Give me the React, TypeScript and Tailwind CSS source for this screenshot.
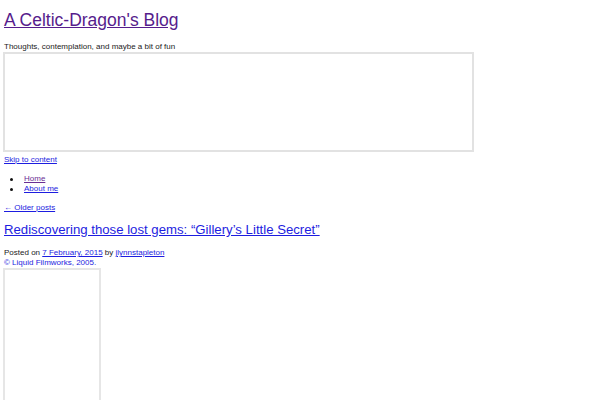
export default function App() {
  const f = { fontFamily: '"Liberation Sans", Arial, sans-serif' };
  return (
    <div className="w-[600px] h-[400px] overflow-hidden bg-white px-[4px] text-[8px] leading-[10px] text-[#222]" style={f}>
      <h1 className="pt-[10px] text-[17.5px] leading-[20px] font-normal">
        <a href="#" className="text-[#561c8c] underline">A Celtic-Dragon's Blog</a>
      </h1>
      <div className="mt-[12px]">Thoughts, contemplation, and maybe a bit of fun</div>
      <div className="-ml-px w-[471px] h-[100px] border-2 border-[#e2e2e2] bg-white"></div>
      <div className="mt-[3px]">
        <a href="#" className="text-[#1d1de0] underline">Skip to content</a>
      </div>
      <ul className="mt-[9px] list-none pl-[6px]">
        <li className="flex items-center">
          <span className="w-[3px] h-[3px] rounded-full bg-[#111] mr-[11px]"></span>
          <a href="#" className="text-[#6a2e94] underline">Home</a>
        </li>
        <li className="flex items-center">
          <span className="w-[3px] h-[3px] rounded-full bg-[#111] mr-[11px]"></span>
          <a href="#" className="text-[#1d1de0] underline">About me</a>
        </li>
      </ul>
      <div className="mt-[9px]">
        <a href="#" className="text-[#1d1de0] underline">← Older posts</a>
      </div>
      <h2 className="mt-[9px] text-[13.2px] leading-[16px] font-normal">
        <a href="#" className="text-[#1d1de0] underline">Rediscovering those lost gems: “Gillery’s Little Secret”</a>
      </h2>
      <div className="mt-[10px]">
        Posted on <a href="#" className="text-[#1d1de0] underline">7 February, 2015</a> by{" "}
        <a href="#" className="text-[#1d1de0] underline">jlynnstapleton</a>
      </div>
      <div className="text-[#1d1de0]">© Liquid Filmworks, 2005.</div>
      <div className="-ml-px mt-0 w-[98px] h-[200px] border-2 border-[#e6e6e6]"></div>
    </div>
  );
}
